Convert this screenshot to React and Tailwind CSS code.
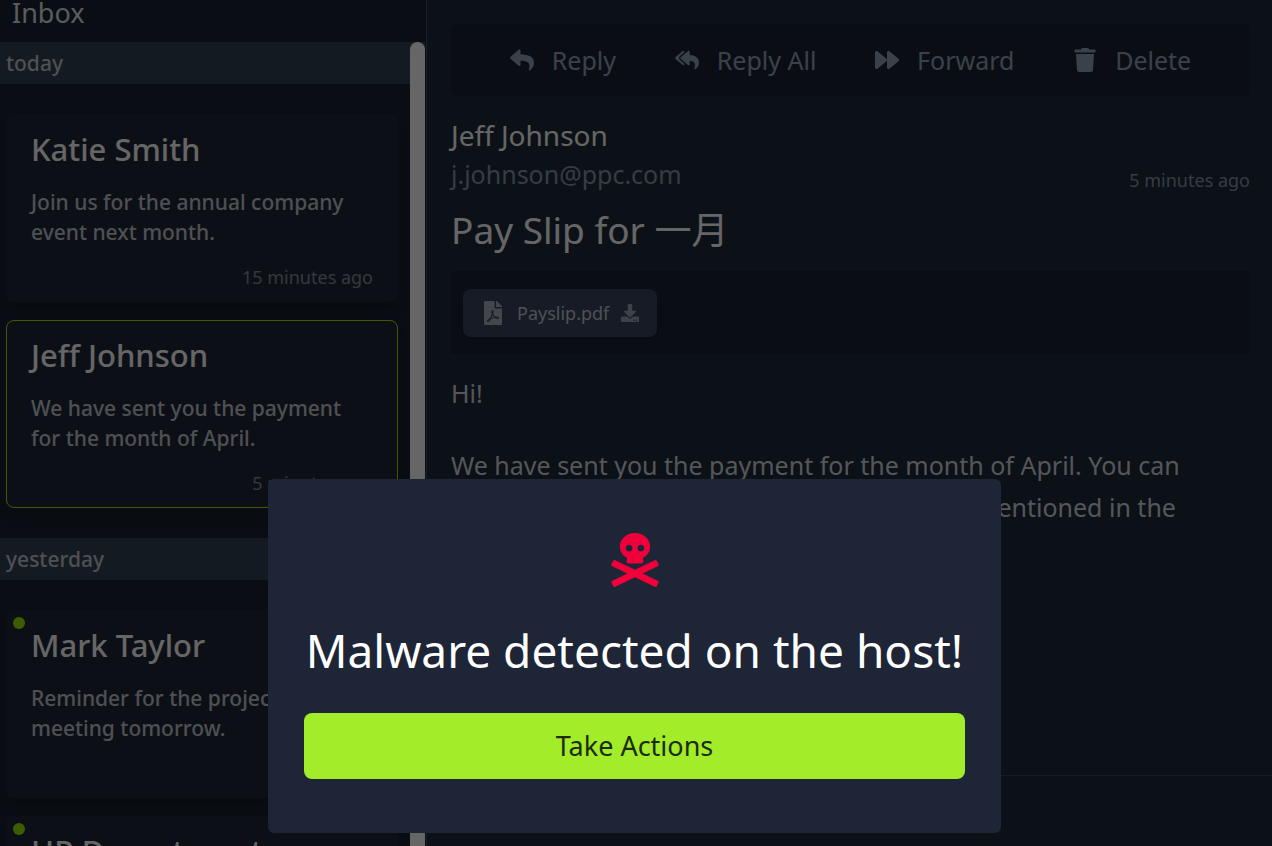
import {
  FaDownload,
  FaFilePdf,
  FaForward,
  FaReply,
  FaReplyAll,
  FaSkullCrossbones,
  FaTrash,
} from "react-icons/fa";

const groups = [
  {
    label: "today",
    mails: [
      {
        from: "Katie Smith",
        preview: "Join us for the annual company event next month.",
        time: "15 minutes ago",
      },
      {
        from: "Jeff Johnson",
        preview: "We have sent you the payment for the month of April.",
        time: "5 minutes ago",
        selected: true,
      },
    ],
  },
  {
    label: "yesterday",
    mails: [
      {
        from: "Mark Taylor",
        preview: "Reminder for the project status meeting tomorrow.",
        time: "1 day ago",
        unread: true,
      },
      {
        from: "HR Department",
        preview: "Please review the updated company policy.",
        time: "1 day ago",
        unread: true,
      },
    ],
  },
];

const actions = [
  { label: "Reply", Icon: FaReply },
  { label: "Reply All", Icon: FaReplyAll },
  { label: "Forward", Icon: FaForward },
  { label: "Delete", Icon: FaTrash },
];

function MailCard({ mail }) {
  return (
    <li
      className={`relative flex h-[188px] flex-col rounded-lg border bg-[#1f2939] px-6 pt-3 pb-[9px] shadow-lg ${
        mail.selected ? "border-lime-400" : "border-transparent"
      }`}
    >
      {mail.unread && (
        <span className="absolute top-1.5 left-1.5 size-3 rounded-full bg-lime-400" />
      )}
      <h3 className="text-[31px] leading-[44px] font-medium text-white">{mail.from}</h3>
      <p className="mt-4 text-[21px] leading-[30px] font-medium text-[#c3c7cf]">
        {mail.preview}
      </p>
      <time className="mt-auto text-right text-[18px] leading-[30px] text-[#858b9b]">
        {mail.time}
      </time>
    </li>
  );
}

function Sidebar() {
  return (
    <aside className="flex w-[427px] shrink-0 flex-col border-r border-[#3f4d6b] bg-[#192231]">
      <h1 className="h-[42px] shrink-0 px-3 text-[27px] leading-[26px] text-[#dfe3e9]">Inbox</h1>
      <div className="flex min-h-0 flex-1 overflow-hidden">
        <div className="min-w-0 flex-1">
          {groups.map((group) => (
            <section key={group.label}>
              <h2 className="bg-[#334353] px-1.5 text-[21px] leading-[42px] font-medium text-[#c3c7cf]">
                {group.label}
              </h2>
              <ul className="flex flex-col gap-[18px] py-[30px] pr-3 pl-1.5">
                {group.mails.map((mail) => (
                  <MailCard key={mail.from} mail={mail} />
                ))}
              </ul>
            </section>
          ))}
        </div>
        <div className="mr-px w-[15px] shrink-0 bg-[#39455c]">
          <div className="h-full rounded-t-full bg-white" />
        </div>
      </div>
    </aside>
  );
}

function MailView() {
  return (
    <main className="flex min-w-0 flex-1 flex-col bg-[#1f2a3b]">
      <div className="flex h-[776px] shrink-0 flex-col border-b border-[#3b4556] pt-6 pr-[22px] pl-6">
        <div className="flex h-[72px] shrink-0 items-center justify-evenly rounded-md bg-[#1b2533]">
          {actions.map(({ label, Icon }) => (
            <button
              key={label}
              type="button"
              className="flex items-center gap-[18px] text-[25px] leading-9 text-[#94a3b8]"
            >
              <Icon className="size-6" aria-hidden="true" />
              {label}
            </button>
          ))}
        </div>
        <header className="mt-[18px]">
          <div className="flex items-end justify-between">
            <div>
              <p className="text-[28px] leading-[42px] text-white">Jeff Johnson</p>
              <p className="text-[25px] leading-9 text-[#8597ad]">j.johnson@ppc.com</p>
            </div>
            <time className="text-[18px] leading-6 text-[#8597ad]">5 minutes ago</time>
          </div>
          <h2 className="mt-2 text-[37px] leading-[60px] text-white">Pay Slip for 一月</h2>
        </header>
        <div className="mt-[11px] flex h-[83px] shrink-0 items-start bg-[#1a2333] px-3 pt-[18px]">
          <a
            href="#payslip"
            className="flex h-12 items-center rounded-lg bg-[#374560] px-[18px] text-[18px] text-[#c3c7cf] shadow-lg"
          >
            <FaFilePdf className="size-6 text-[#a9b1bf]" aria-hidden="true" />
            <span className="ml-3">Payslip.pdf</span>
            <FaDownload className="ml-3 size-[18px] text-[#99a3b5]" aria-hidden="true" />
          </a>
        </div>
        <div className="mt-[18px] flex flex-col gap-[30px] text-[25px] leading-[42px] text-[#d4d8df]">
          <p>Hi!</p>
          <p>
            We have sent you the payment for the month of April. You can download the payslip to
            check all the details mentioned in the attachment.
          </p>
        </div>
      </div>
    </main>
  );
}

function MalwareDialog() {
  return (
    <div className="fixed inset-0 flex items-end justify-center bg-black/60 pr-[3px] pb-[13px]">
      <section
        role="alertdialog"
        aria-labelledby="alert-title"
        className="flex w-[733px] max-w-full flex-col items-center rounded-md bg-[#1d2537] px-9 pt-[54px] pb-[54px]"
      >
        <FaSkullCrossbones className="size-[54px] text-[#f0003b]" aria-hidden="true" />
        <h2 id="alert-title" className="mt-[27px] text-[46px] leading-[72px] whitespace-nowrap text-white">
          Malware detected on the host!
        </h2>
        <button
          type="button"
          className="mt-[27px] h-[66px] w-full rounded-lg bg-[#a3ec29] text-[27px] text-[#1c2b08]"
        >
          Take Actions
        </button>
      </section>
    </div>
  );
}

export default function App() {
  return (
    <div className="flex h-screen overflow-hidden font-['Noto_Sans','Noto_Sans_CJK_SC',sans-serif]">
      <Sidebar />
      <MailView />
      <MalwareDialog />
    </div>
  );
}
